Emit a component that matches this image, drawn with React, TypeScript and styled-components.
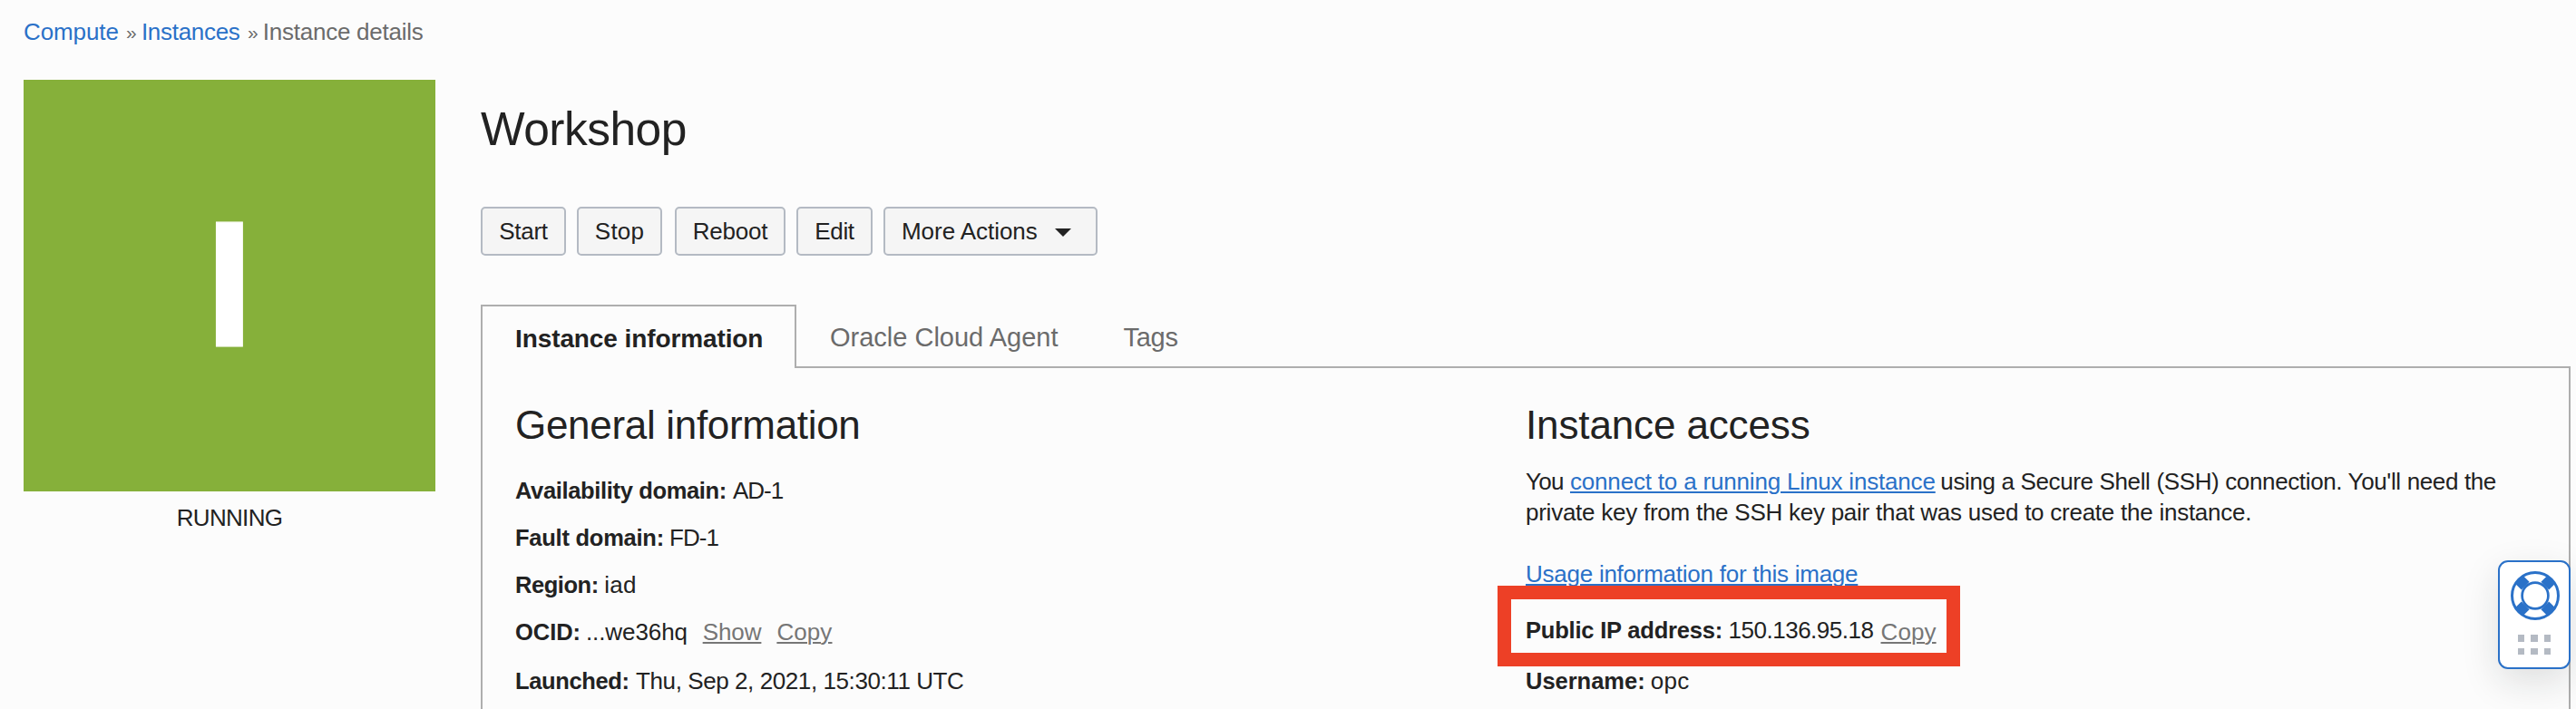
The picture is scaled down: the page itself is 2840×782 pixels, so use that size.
import React from "react";
import styled, { createGlobalStyle } from "styled-components";

const color = {
  page: "#fcfcfc",
  ink: "#222222",
  muted: "#6b6b6b",
  subtle: "#767676",
  link: "#2a71c8",
  line: "#aeaeae",
  running: "#86b03a",
  highlight: "#ed4026",
};

const GlobalStyle = createGlobalStyle`
  * { box-sizing: border-box; }
  body {
    margin: 0;
    background: ${color.page};
    color: ${color.ink};
    font-family: "Liberation Sans", Arial, sans-serif;
    font-size: 26px;
    line-height: 36px;
  }
`;

type Spacing = { $track?: number; $gap?: number };

const Text = styled.span<Spacing>`
  letter-spacing: ${(p) => p.$track ?? 0}px;
  margin-left: ${(p) => p.$gap ?? 0}px;
  white-space: pre;
`;

const Label = styled(Text)`
  font-size: 25.5px;
  font-weight: bold;
`;

const TextLink = styled(Text).attrs({ as: "a" })`
  color: ${color.link};
  text-decoration: underline;
  text-decoration-thickness: 2px;
  text-underline-offset: 2px;
`;

const ActionLink = styled(TextLink)<{ $drop?: number }>`
  color: ${color.subtle};
  position: relative;
  top: ${(p) => p.$drop ?? 0}px;
`;

const Page = styled.div`
  position: relative;
  height: 782px;
  overflow: hidden;
  padding: 0 6px 0 26px;
`;

const Breadcrumb = styled.nav`
  display: flex;
  height: 88px;
  padding-top: 17px;
  color: ${color.muted};
`;

const Crumb = styled(Text)<{ $link?: boolean }>`
  color: ${(p) => (p.$link ? color.link : color.muted)};
`;

const Separator = styled(Text)`
  width: 11px;
  font-size: 21px;
  line-height: 37px;
`;

const Body = styled.div`
  display: flex;
  gap: 50px;
`;

const Side = styled.aside`
  width: 454px;
  flex: none;
  text-align: center;
`;

const StatusTile = styled.div`
  display: flex;
  align-items: center;
  justify-content: center;
  height: 454px;
  padding-bottom: 5px;
  background: ${color.running};
  color: #fff;
  font-size: 199px;
  font-weight: bold;
  line-height: 224px;
  -webkit-text-stroke: 1.2px #fff;
`;

const StatusText = styled.div`
  margin-top: 11px;
  letter-spacing: -0.68px;
`;

const Main = styled.main`
  flex: 1;
  min-width: 0;
  padding-top: 24px;
`;

const Title = styled.h1`
  margin: 0;
  font-size: 51.5px;
  font-weight: normal;
  line-height: 60px;
  letter-spacing: -0.5px;
`;

const Toolbar = styled.div`
  display: flex;
  gap: 12px;
  margin-top: 56px;
`;

const Button = styled.button<{ $width: number; $track: number; $gap?: number; $menu?: boolean }>`
  display: flex;
  align-items: center;
  justify-content: ${(p) => (p.$menu ? "flex-start" : "center")};
  width: ${(p) => p.$width}px;
  height: 54px;
  margin: 0 0 0 ${(p) => p.$gap ?? 0}px;
  padding: 0 ${(p) => (p.$menu ? 18 : 0)}px;
  border: 2px solid #b4bac3;
  border-radius: 5px;
  background: #f5f5f5;
  color: ${color.ink};
  font: inherit;
  letter-spacing: ${(p) => p.$track}px;
  white-space: nowrap;
`;

const Caret = styled.svg`
  width: 18px;
  height: 9px;
  margin: 3px 0 0 19px;
`;

const Tabs = styled.div`
  display: flex;
  height: 68px;
  margin-top: 54px;
`;

const Tab = styled.div<Spacing>`
  margin-left: ${(p) => p.$gap ?? 0}px;
  padding-top: 18px;
  color: ${color.muted};
  font-size: 29px;
  letter-spacing: ${(p) => p.$track ?? 0}px;
`;

const ActiveTab = styled(Tab)`
  z-index: 1;
  width: 348px;
  height: 70px;
  padding-left: 36px;
  border: 2px solid ${color.line};
  border-bottom: 0;
  background: ${color.page};
  color: ${color.ink};
  font-size: 28px;
  font-weight: bold;
`;

const Panel = styled.section`
  display: grid;
  grid-template-columns: 1114px 1fr;
  height: 420px;
  padding: 36px 36px 0;
  border: 2px solid ${color.line};
`;

const Heading = styled.h2<Spacing>`
  margin: 0 0 0 ${(p) => p.$gap ?? 0}px;
  font-size: 44px;
  font-weight: normal;
  line-height: 54px;
  letter-spacing: ${(p) => p.$track}px;
`;

const Field = styled.div<{ $above: number }>`
  position: relative;
  display: flex;
  align-items: baseline;
  height: 36px;
  margin-top: ${(p) => p.$above}px;
`;

const Paragraph = styled.div`
  margin-top: 18px;
  line-height: 34px;
`;

const Line = styled.div`
  display: flex;
`;

const Highlight = styled.div`
  position: absolute;
  left: -31px;
  top: -31px;
  width: 510px;
  height: 89px;
  border: 15px solid ${color.highlight};
`;

const HelpWidget = styled.div`
  position: absolute;
  z-index: 2;
  right: 6px;
  top: 618px;
  width: 80px;
  height: 120px;
  display: flex;
  flex-direction: column;
  align-items: center;
  padding-top: 10px;
  border: 2px solid ${color.link};
  border-radius: 11px;
  background: #fff;
  box-shadow: 0 14px 40px rgba(20, 30, 30, 0.13);
`;

const Lifebuoy = styled.svg`
  width: 54px;
  height: 54px;
  margin-left: 2px;
`;

const Grip = styled.div`
  display: grid;
  grid-template-columns: repeat(3, 7.5px);
  grid-auto-rows: 7.5px;
  gap: 7px;
  margin-top: 16px;

  i {
    background: #b4bac3;
  }
`;

export default function App() {
  return (
    <>
      <GlobalStyle />
      <Page>
        <Breadcrumb>
          <Crumb $link $track={-0.09}>Compute</Crumb>
          <Separator $gap={8}>»</Separator>
          <Crumb $link $track={-0.286} $gap={6}>Instances</Crumb>
          <Separator $gap={8.5}>»</Separator>
          <Crumb $track={-0.244} $gap={5.7}>Instance details</Crumb>
        </Breadcrumb>
        <Body>
          <Side>
            <StatusTile>I</StatusTile>
            <StatusText>RUNNING</StatusText>
          </Side>
          <Main>
            <Title>Workshop</Title>
            <Toolbar>
              <Button $width={94} $track={-0.25}>Start</Button>
              <Button $width={94} $track={0.2}>Stop</Button>
              <Button $width={122} $track={-0.22} $gap={2}>Reboot</Button>
              <Button $width={84} $track={-0.3}>Edit</Button>
              <Button $width={236} $track={-0.05} $menu>
                More Actions
                <Caret viewBox="0 0 18 9">
                  <path d="M0 0h18L9 9z" fill={color.ink} />
                </Caret>
              </Button>
            </Toolbar>
            <Tabs>
              <ActiveTab $track={-0.1}>Instance information</ActiveTab>
              <Tab $gap={37}>Oracle Cloud Agent</Tab>
              <Tab $gap={72} $track={-0.25}>Tags</Tab>
            </Tabs>
            <Panel>
              <div>
                <Heading $track={-0.31}>General information</Heading>
                <Field $above={27}>
                  <Label $track={-0.35}>Availability domain:</Label>
                  <Text $gap={7} $track={-1}>AD-1</Text>
                </Field>
                <Field $above={16}>
                  <Label $track={-0.25}>Fault domain:</Label>
                  <Text $gap={6} $track={-0.9}>FD-1</Text>
                </Field>
                <Field $above={16}>
                  <Label $track={-0.45}>Region:</Label>
                  <Text $gap={6.5} $track={0.2}>iad</Text>
                </Field>
                <Field $above={16}>
                  <Label $track={-0.05}>OCID:</Label>
                  <Text $gap={6} $track={-0.1}>...we36hq</Text>
                  <ActionLink $gap={16.8} $track={-0.08}>Show</ActionLink>
                  <ActionLink $gap={17} $track={0.1}>Copy</ActionLink>
                </Field>
                <Field $above={18}>
                  <Label $track={-0.37}>Launched:</Label>
                  <Text $gap={7.5} $track={-0.417}>Thu, Sep 2, 2021, 15:30:11 UTC</Text>
                </Field>
              </div>
              <div>
                <Heading $track={-0.13}>Instance access</Heading>
                <Paragraph>
                  <Line>
                    <Text $track={-0.7}>You</Text>
                    <TextLink $gap={7.2} $track={-0.18}>connect to a running Linux instance</TextLink>
                    <Text $gap={5.6} $track={-0.364}>using a Secure Shell (SSH) connection. You'll need the</Text>
                  </Line>
                  <Line>
                    <Text $track={-0.25}>private key from the SSH key pair that was used to create the instance.</Text>
                  </Line>
                </Paragraph>
                <Field $above={33}>
                  <TextLink $track={-0.25}>Usage information for this image</TextLink>
                </Field>
                <Field $above={26}>
                  <Label $track={-0.2}>Public IP address:</Label>
                  <Text $gap={6.5} $track={-0.484}>150.136.95.18</Text>
                  <ActionLink $gap={8} $track={0.1} $drop={2}>Copy</ActionLink>
                  <Highlight />
                </Field>
                <Field $above={20}>
                  <Label $track={-0.02}>Username:</Label>
                  <Text $gap={6} $track={0.3}>opc</Text>
                </Field>
              </div>
            </Panel>
          </Main>
        </Body>
        <HelpWidget>
          <Lifebuoy viewBox="-27 -27 54 54" fill="none" stroke={color.link}>
            <circle r="25.5" strokeWidth="3" />
            <circle r="14.4" strokeWidth="2.7" />
            <path
              d="M10.8 -10.8L17.4 -17.4M10.8 10.8L17.4 17.4M-10.8 10.8L-17.4 17.4M-10.8 -10.8L-17.4 -17.4"
              strokeWidth="12.4"
            />
          </Lifebuoy>
          <Grip>
            <i /><i /><i /><i /><i /><i />
          </Grip>
        </HelpWidget>
      </Page>
    </>
  );
}
